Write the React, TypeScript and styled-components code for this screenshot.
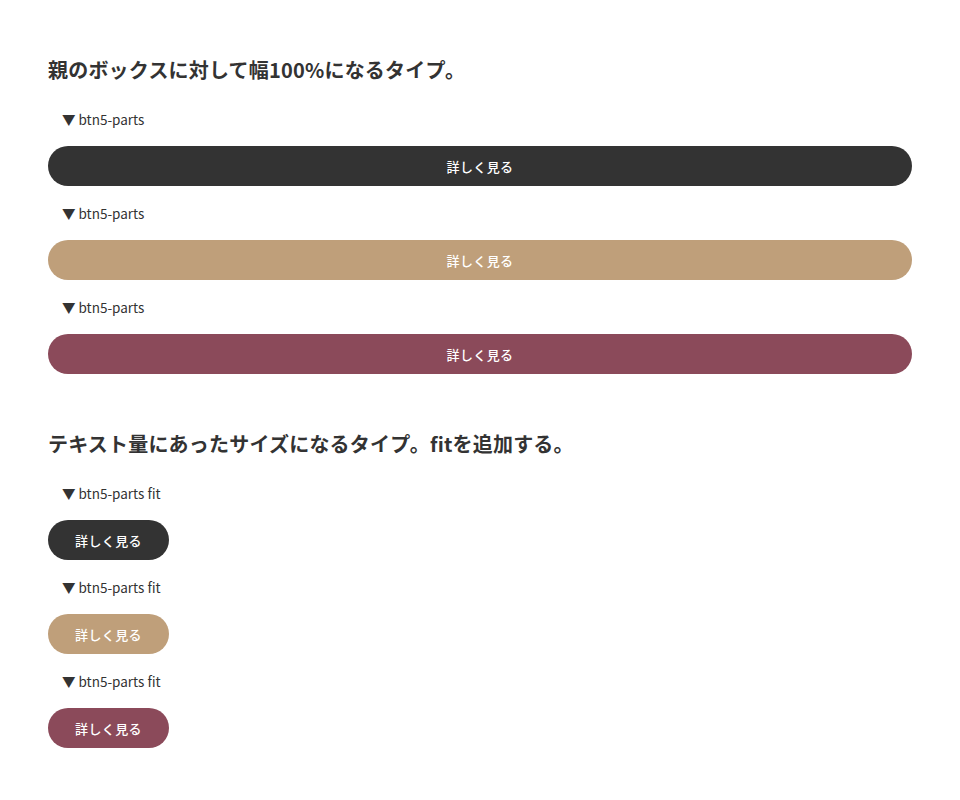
import { FC } from "react";
import styled, { createGlobalStyle } from "styled-components";

const GlobalStyle = createGlobalStyle`
  body {
    margin: 0;
    background: #fff;
    color: #333;
    font-family: "Noto Sans CJK JP", "Noto Sans", sans-serif;
  }
`;

type Tone = "dark" | "gold" | "wine";

const tones: Record<Tone, string> = {
  dark: "#333333",
  gold: "#bf9f7a",
  wine: "#8b4a5a",
};

interface SampleProps {
  tone: Tone;
  fit?: boolean;
}

const Sample: FC<SampleProps> = ({ tone, fit }) => (
  <>
    <Label>▼ btn5-parts{fit ? " fit" : ""}</Label>
    <ButtonLink href="#" $tone={tone} $fit={fit}>
      詳しく見る
    </ButtonLink>
  </>
);

const App: FC = () => {
  const list: Tone[] = ["dark", "gold", "wine"];

  return (
    <>
      <GlobalStyle />
      <Page>
        <Section>
          <Heading>親のボックスに対して幅100%になるタイプ。</Heading>
          <List>
            {list.map((tone) => (
              <Sample key={tone} tone={tone} />
            ))}
          </List>
        </Section>
        <Section>
          <Heading>テキスト量にあったサイズになるタイプ。fitを追加する。</Heading>
          <List>
            {list.map((tone) => (
              <Sample key={tone} tone={tone} fit />
            ))}
          </List>
        </Section>
      </Page>
    </>
  );
};

export default App;

const Page = styled.div`
  padding: 55px 48px 40px;
  display: flex;
  flex-direction: column;
  gap: 55px;
`;

const Section = styled.section`
  display: flex;
  flex-direction: column;
`;

const Heading = styled.h2`
  margin: 0 0 24px;
  font-size: 20px;
  line-height: 30px;
  font-weight: 700;
  letter-spacing: 0.01em;
  color: #333;
`;

const List = styled.div`
  display: flex;
  flex-direction: column;
  align-items: flex-start;
  gap: 17px;
`;

const Label = styled.p`
  margin: 0;
  padding-left: 14px;
  font-size: 13.5px;
  line-height: 20px;
  color: #333;
`;

const ButtonLink = styled.a<{ $tone: Tone; $fit?: boolean }>`
  display: flex;
  align-items: center;
  justify-content: center;
  box-sizing: border-box;
  height: 40px;
  width: ${({ $fit }) => ($fit ? "auto" : "100%")};
  padding: 0 27px;
  border-radius: 20px;
  background: ${({ $tone }) => tones[$tone]};
  color: #fff;
  font-size: 13px;
  font-weight: 500;
  letter-spacing: 0.03em;
  text-decoration: none;
`;
